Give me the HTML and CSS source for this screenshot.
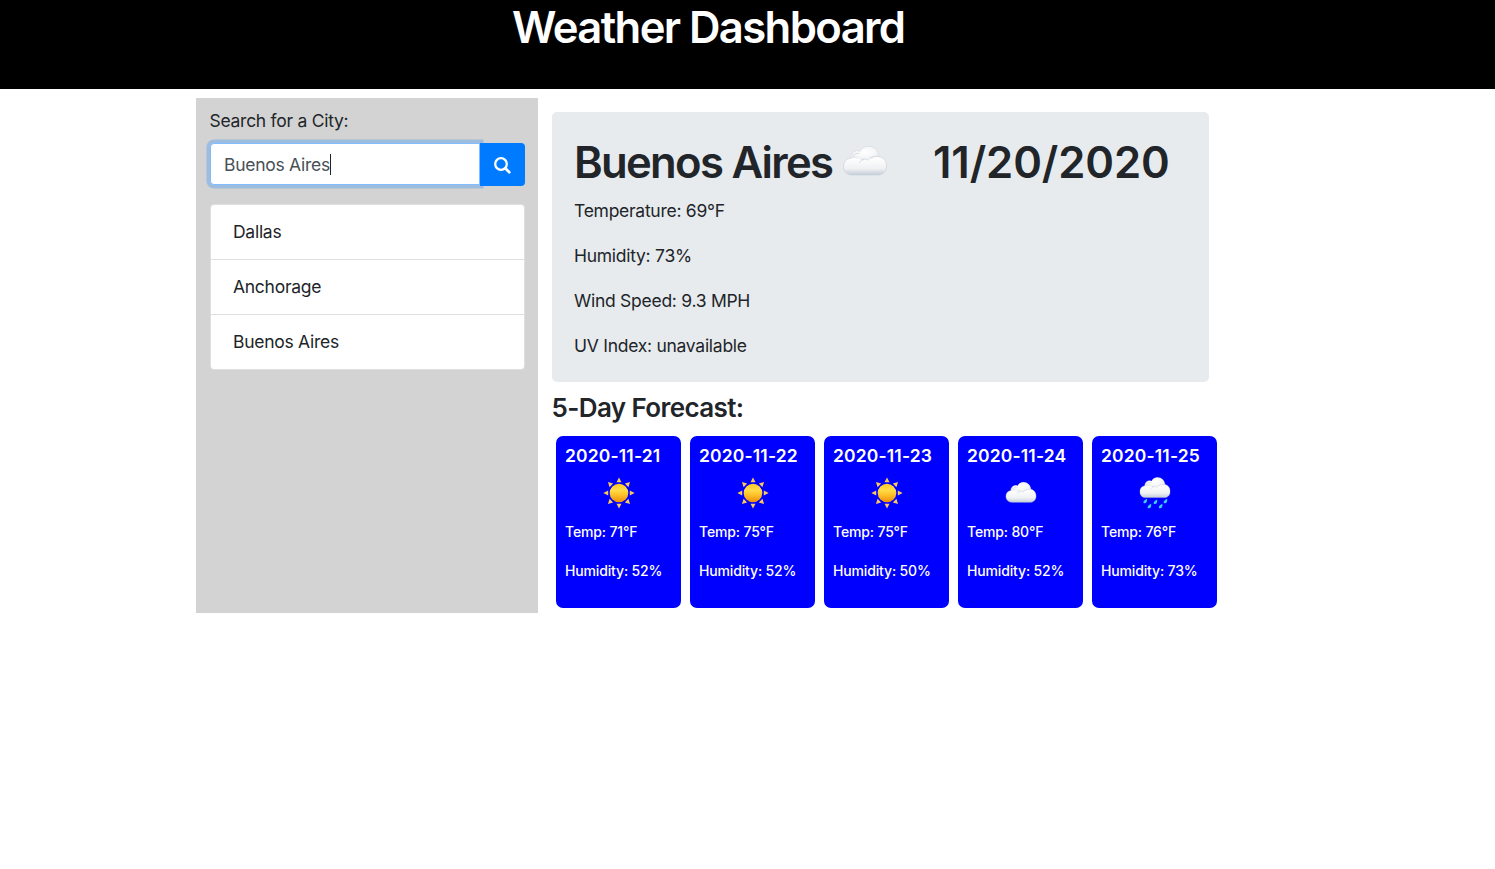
FILE: index.html
```html
<!DOCTYPE html>
<html lang="en">
<head>
<meta charset="utf-8">
<title>Weather Dashboard</title>
<link rel="stylesheet" href="styles.css">
</head>
<body>
<svg class="defs" width="0" height="0" aria-hidden="true">
  <defs>
    <radialGradient id="puff" cx=".5" cy=".38" r=".65"><stop offset="0" stop-color="#fff"/><stop offset=".6" stop-color="#f5f6f8"/><stop offset="1" stop-color="#d9dfe5"/></radialGradient>
    <linearGradient id="base" x2="0" y2="1"><stop offset="0" stop-color="#f4f6f8"/><stop offset=".45" stop-color="#fdfdfd"/><stop offset=".78" stop-color="#eff1f3"/><stop offset="1" stop-color="#c3cdd7"/></linearGradient>
    <linearGradient id="disc" x2="0" y2="1"><stop offset="0" stop-color="#ffc928"/><stop offset=".35" stop-color="#ffdc48"/><stop offset=".65" stop-color="#fdbb25"/><stop offset="1" stop-color="#ec8c0c"/></linearGradient>
    <symbol id="cloud" viewBox="0 0 44 30">
      <path d="M9 29C3.500 29 .5 24.800 .5 20.500c0-4.600 3-7.700 7-8.300C7.500 8 10.500 5 14.500 5c1.200 0 2 .2 2.800.7C19 2.400 21.800.5 25.500.5c6 0 10 4.300 10.500 10C40.500 11.500 43.500 15 43.500 20c0 5.500-3.500 9-8.500 9Z" fill="url(#base)" stroke="#c8d0d9" stroke-width=".6"/>
      <path d="M17.300 5.700C19 2.400 21.800.8 25.500.8c5.800 0 9.900 4.300 10.200 9.700-3-.3-5 .5-7 2.500-3-1.300-7-1-9 2-2-2.500-6-3.500-11.500-2.600C8.200 8 11 5.300 14.500 5.300c1.200 0 2 .2 2.800.4Z" fill="url(#puff)"/>
      <path d="M10.500 9.500C12 7.700 14 7 16 7.500M16.500 16.500c1-3 5-4.700 8.500-2.500M24.500 14c3-3.500 7.500-4.200 11.500-3.500" fill="none" stroke="#d3d9df" stroke-width=".9" stroke-linecap="round"/>
    </symbol>
    <symbol id="sun" viewBox="-16 -16 32 32">
      <g fill="#f9c95c"><path id="ray" d="M0-15.600 2.500-10.800H-2.500Z"/><use href="#ray" transform="rotate(45)"/><use href="#ray" transform="rotate(90)"/><use href="#ray" transform="rotate(135)"/><use href="#ray" transform="rotate(180)"/><use href="#ray" transform="rotate(225)"/><use href="#ray" transform="rotate(270)"/><use href="#ray" transform="rotate(315)"/></g>
      <circle r="9.300" fill="url(#disc)"/>
    </symbol>
    <symbol id="rain" viewBox="0 0 32 32">
      <use href="#cloud" x=".5" y="0" width="31" height="21.500"/>
      <path id="drop" d="M8 21.700c.3 2.500-.5 4.600-2.200 4.600-2.200 0-1.900-2.600 2.200-4.600Z" fill="#3ccbf3"/><use href="#drop" x="10.200" y=".8"/><use href="#drop" x="20.200" y="0"/><use href="#drop" x="4.200" y="5"/><use href="#drop" x="15.400" y="5"/>
    </symbol>
  </defs>
</svg>
<header class="banner"><h1 class="banner-title">Weather Dashboard</h1></header>
<main class="layout">
  <aside class="sidebar">
    <label class="label" for="city">Search for a City:</label>
    <div class="search">
      <div class="input" id="city"><span>Buenos Aires</span><i class="caret"></i></div>
      <button class="button" aria-label="Search"><svg width="17" height="17" viewBox="0 0 17 17" fill="none" stroke="#fff"><circle cx="7" cy="7" r="5.800" stroke-width="2.300"/><path d="m11.300 11.300 4 4" stroke-width="2.700" stroke-linecap="round"/></svg></button>
    </div>
    <ul class="history"><li>Dallas</li><li>Anchorage</li><li>Buenos Aires</li></ul>
  </aside>
  <section class="content">
    <div class="current">
      <h2 class="heading"><span class="city">Buenos Aires</span><svg class="current-icon"><use href="#cloud"/></svg><span class="date">11/20/2020</span></h2>
      <p>Temperature: 69°F</p>
      <p>Humidity: 73%</p>
      <p>Wind Speed: 9.3 MPH</p>
      <p>UV Index: unavailable</p>
    </div>
    <h3 class="forecast-title">5-Day Forecast:</h3>
    <div class="forecast">
      <article class="card"><h4>2020-11-21</h4><svg class="icon"><use href="#sun"/></svg><p>Temp: 71°F</p><p>Humidity: 52%</p></article>
      <article class="card"><h4>2020-11-22</h4><svg class="icon"><use href="#sun"/></svg><p>Temp: 75°F</p><p>Humidity: 52%</p></article>
      <article class="card"><h4>2020-11-23</h4><svg class="icon"><use href="#sun"/></svg><p>Temp: 75°F</p><p>Humidity: 50%</p></article>
      <article class="card"><h4>2020-11-24</h4><svg class="icon cloudy"><use href="#cloud"/></svg><p>Temp: 80°F</p><p>Humidity: 52%</p></article>
      <article class="card"><h4>2020-11-25</h4><svg class="icon"><use href="#rain"/></svg><p>Temp: 76°F</p><p>Humidity: 73%</p></article>
    </div>
  </section>
</main>
</body>
</html>
```
FILE: styles.css
```css
* { box-sizing: border-box; }
body { margin: 0; background: #fff; color: #212529; font: 17.5px/27px Inter, "Liberation Sans", sans-serif; letter-spacing: -.27px; }
h1, h2, h3, h4, p, ul { margin: 0; padding: 0; }
.defs { position: absolute; }
.banner { height: 89px; background: #000; color: #fff; padding: 1px 0 0 512px; }
.banner-title { font-size: 43.6px; line-height: 54px; font-weight: 600; letter-spacing: -1.6px; white-space: nowrap; }
.layout { display: flex; padding: 9px 0 0 196px; }
.sidebar { width: 342px; height: 515px; background: #d3d3d3; padding: 9px 13px 0 14px; }
.label { display: block; height: 36px; margin-left: -.5px; }
.search { display: flex; height: 43px; }
.input { display: flex; align-items: center; width: 270px; height: 42px; padding-left: 13px; border: 1px solid #80bdff; border-radius: 4px 0 0 4px; background: #fff; color: #495057; box-shadow: 0 0 0 3.500px rgba(0,123,255,.25); }
.caret { width: 1px; height: 21px; background: #212529; }
.button { position: relative; width: 45px; padding: 0; border: 0; border-radius: 0 4px 4px 0; background: #007bff; display: flex; align-items: center; justify-content: center; }
.button svg { margin-right: 1px; margin-top: 1px; }
.history { list-style: none; margin-top: 18px; border: 1px solid #dfdfdf; border-radius: 4px; background: #fff; }
.history li { height: 55px; padding: 13px 22px; border-bottom: 1px solid #dfdfdf; }
.history li:last-child { height: 54px; border: 0; }
.content { width: 671px; padding: 14px 0 0 14px; }
.current { width: 657px; height: 270px; padding: 22px; border-radius: 5px; background: #e8ebee; }
.heading { display: flex; height: 63px; font-size: 43.6px; line-height: 57px; font-weight: 600; letter-spacing: -1.7px; white-space: nowrap; }
.city { width: 269px; }
.current-icon { width: 44px; height: 30px; margin-top: 12px; }
.date { margin-left: 46px; letter-spacing: -.1px; }
.current p { height: 45px; }
.forecast-title { height: 54px; font-size: 26px; line-height: 52px; font-weight: 600; letter-spacing: -.6px; margin-left: -.5px; }
.forecast { display: flex; gap: 9px; padding-left: 4px; }
.card { display: flex; flex-direction: column; flex: 0 0 125px; height: 172px; padding: 6px 9px 0; border-radius: 7px; background: #00f; color: #fff; }
.card h4 { height: 35px; font-size: 17.5px; line-height: 27px; font-weight: 600; letter-spacing: .15px; white-space: nowrap; }
.card p { height: 39px; font-size: 14px; line-height: 22px; font-weight: 500; letter-spacing: -.15px; white-space: nowrap; }
.icon { width: 32px; height: 32px; margin: 0 auto 12px; }
.cloudy { height: 21px; margin: 5px auto 18px; }
```
